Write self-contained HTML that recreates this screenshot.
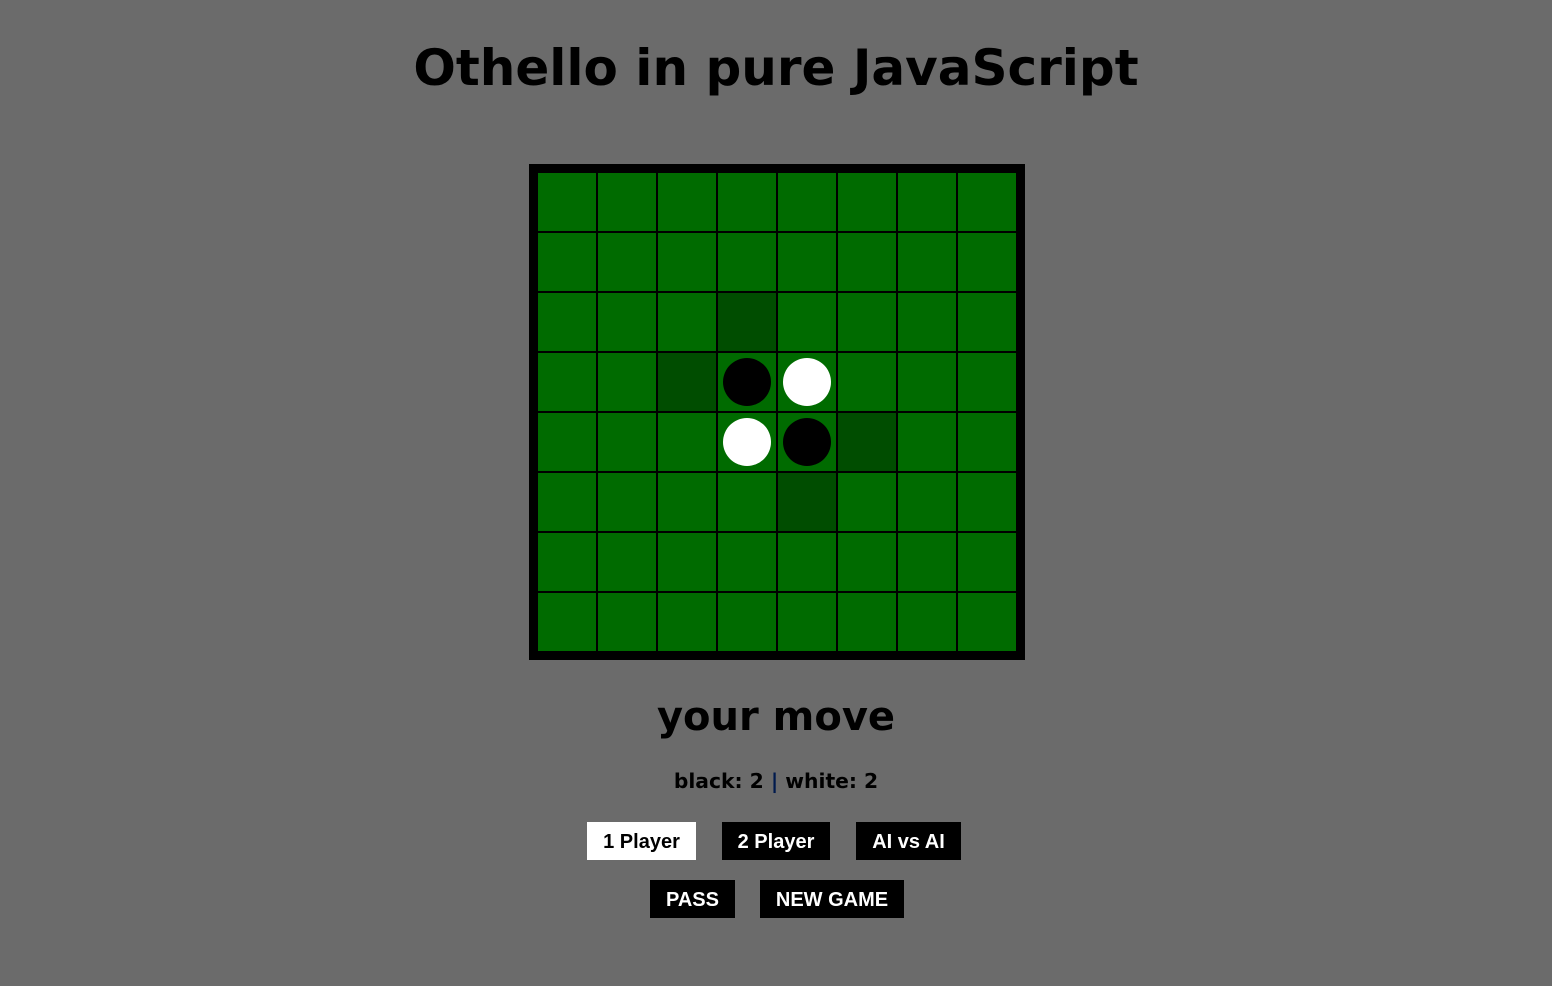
<!DOCTYPE html>
<html><head><style>
body{margin:0;background:#6b6b6b;width:1552px;height:986px;position:relative;font-family:"DejaVu Sans",sans-serif;overflow:hidden}
h1{position:absolute;top:36px;left:0;width:1552px;text-align:center;margin:0;font-size:50px;font-weight:bold;line-height:64px;color:#000}
#board{position:absolute;left:529px;top:164px;width:478px;height:478px;padding:9px;background:#000;display:grid;grid-template-columns:repeat(8,58px);grid-template-rows:repeat(8,58px);gap:2px}
.c{background:#006b00;position:relative}
.d{background:#004d00}
.p{position:absolute;left:5px;top:5px;width:48px;height:48px;border-radius:50%}
.b{background:#000}.w{background:#fff}
#st{position:absolute;top:692px;width:1552px;text-align:center;font-size:40px;font-weight:bold;line-height:50px}
#sc{position:absolute;top:768px;width:1552px;text-align:center;font-size:20.3px;font-weight:bold;line-height:26px}
.btn{position:absolute;height:38px;line-height:40px;text-align:center;font-family:"Liberation Sans",Arial,sans-serif;font-weight:bold;font-size:20px;background:#000;color:#fff}
</style></head><body>
<h1>Othello in pure JavaScript</h1>
<div id="board">
<div class="c"></div><div class="c"></div><div class="c"></div><div class="c"></div><div class="c"></div><div class="c"></div><div class="c"></div><div class="c"></div>
<div class="c"></div><div class="c"></div><div class="c"></div><div class="c"></div><div class="c"></div><div class="c"></div><div class="c"></div><div class="c"></div>
<div class="c"></div><div class="c"></div><div class="c"></div><div class="c d"></div><div class="c"></div><div class="c"></div><div class="c"></div><div class="c"></div>
<div class="c"></div><div class="c"></div><div class="c d"></div><div class="c"><div class="p b"></div></div><div class="c"><div class="p w"></div></div><div class="c"></div><div class="c"></div><div class="c"></div>
<div class="c"></div><div class="c"></div><div class="c"></div><div class="c"><div class="p w"></div></div><div class="c"><div class="p b"></div></div><div class="c d"></div><div class="c"></div><div class="c"></div>
<div class="c"></div><div class="c"></div><div class="c"></div><div class="c"></div><div class="c d"></div><div class="c"></div><div class="c"></div><div class="c"></div>
<div class="c"></div><div class="c"></div><div class="c"></div><div class="c"></div><div class="c"></div><div class="c"></div><div class="c"></div><div class="c"></div>
<div class="c"></div><div class="c"></div><div class="c"></div><div class="c"></div><div class="c"></div><div class="c"></div><div class="c"></div><div class="c"></div>
</div>
<div id="st">your move</div>
<div id="sc">black: 2 <span style="color:#001a4d">|</span> white: 2</div>
<div class="btn" style="left:587px;top:822px;width:109px;background:#fff;color:#000">1 Player</div>
<div class="btn" style="left:722px;top:822px;width:108px">2 Player</div>
<div class="btn" style="left:856px;top:822px;width:105px">AI vs AI</div>
<div class="btn" style="left:650px;top:880px;width:85px">PASS</div>
<div class="btn" style="left:760px;top:880px;width:144px">NEW GAME</div>
</body></html>
